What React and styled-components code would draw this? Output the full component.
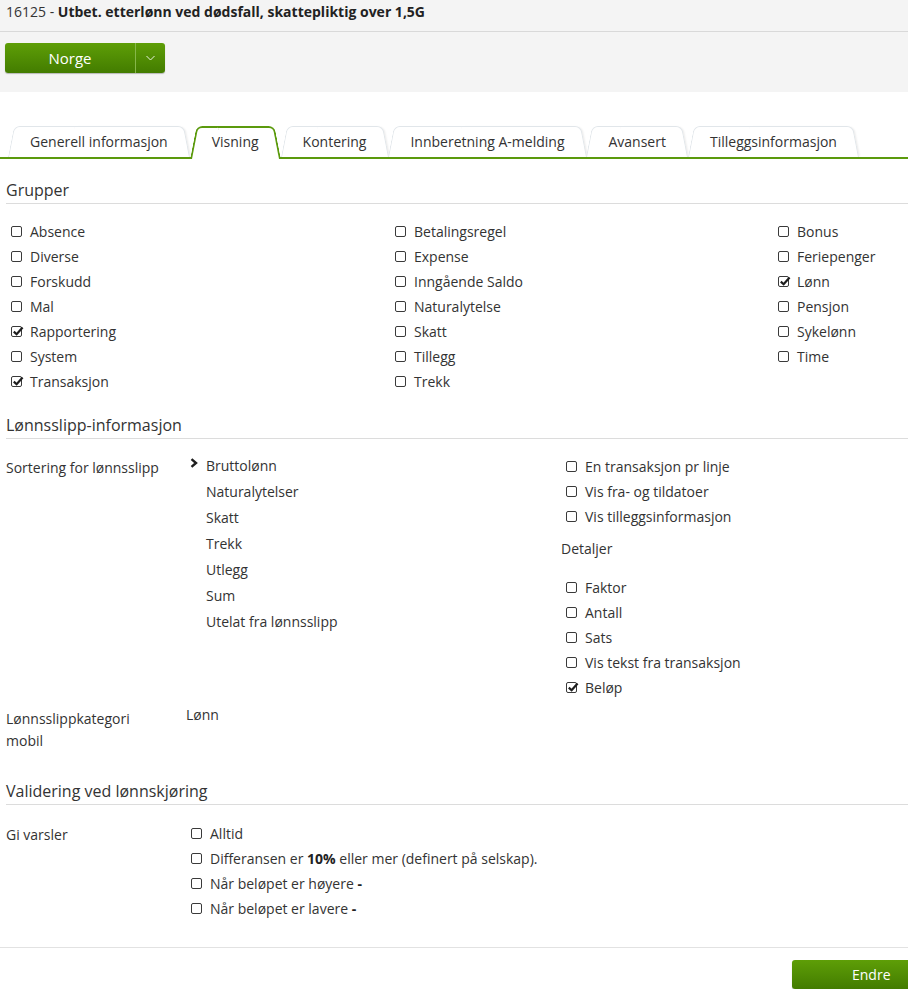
import React from "react";
import styled, { createGlobalStyle, css } from "styled-components";

const GREEN = "#5b9a0d";

const GlobalStyle = createGlobalStyle`
  body {
    margin: 0;
    font-family: "Open Sans", "Noto Sans", sans-serif;
    font-size: 14px;
    color: #333;
    background: #fff;
  }
  * { box-sizing: border-box; }
`;

// Header

const Header = styled.div`
  background: #f4f4f4;
  padding-bottom: 19px;
`;

const TitleBar = styled.div`
  height: 32px;
  padding: 0 6px;
  line-height: 24px;
  border-bottom: 1px solid #d9d9d9;
  color: #333;
  b {
    color: #222;
    font-weight: 700;
  }
`;

const SplitButton = styled.div`
  display: flex;
  width: 160px;
  height: 30px;
  margin: 11px 0 0 5px;
  border-radius: 3px;
  background: linear-gradient(#5e9e07, #437c00);
  box-shadow: 0 1px 1px rgba(0, 0, 0, 0.25);
  color: #fff;
`;

const SplitMain = styled.div`
  flex: 1;
  display: flex;
  align-items: center;
  justify-content: center;
  font-size: 15px;
  border-right: 1px solid #86b74a;
`;

const SplitArrow = styled.div`
  width: 29px;
  display: flex;
  align-items: center;
  justify-content: center;
`;

// Tabs

const TabStrip = styled.div`
  display: flex;
  height: 33px;
  margin-top: 34px;
  padding-left: 8px;
  border-bottom: 2px solid ${GREEN};
`;

const Tab = styled.div`
  position: relative;
  z-index: ${({ $active }) => ($active ? 2 : 0)};
  height: ${({ $active }) => ($active ? 33 : 31)}px;
  margin-bottom: ${({ $active }) => ($active ? -2 : 0)}px;
  padding: 0 22px;
  line-height: 31px;
  color: #333;
  white-space: nowrap;

  &::before,
  &::after {
    content: "";
    position: absolute;
    top: 0;
    bottom: 0;
    width: 60%;
    z-index: -1;
    background: #fff;
    transform-origin: bottom;
    ${({ $active }) =>
      $active
        ? css`border: 2px solid ${GREEN};`
        : css`border: 1px solid #e1e6ea;`}
    border-bottom: none;
  }
  &::before {
    left: 0;
    border-right: none;
    border-radius: 6px 0 0 0;
    transform: skewX(-11deg);
  }
  &::after {
    right: 0;
    border-left: none;
    border-radius: 0 6px 0 0;
    transform: skewX(11deg);
    ${({ $active }) => !$active && css`box-shadow: 2px 0 2px -1px rgba(0, 0, 0, 0.08);`}
  }
`;

// Sections

const Section = styled.section`
  margin: 0 0 0 6px;
`;

const SectionTitle = styled.h2`
  margin: ${({ $top }) => $top}px 0 0;
  padding-bottom: 2px;
  font-size: 16px;
  font-weight: 400;
  line-height: 22px;
  color: #333;
  border-bottom: 1px solid #dcdcdc;
`;

const GroupGrid = styled.div`
  display: grid;
  grid-template-columns: 384px 383px 1fr;
  margin-top: 15px;
  padding-left: 5px;
`;

const Column = styled.div`
  display: flex;
  flex-direction: column;
`;

const CheckRow = styled.label`
  display: flex;
  align-items: center;
  gap: 8px;
  height: 25px;
  color: #333;
  b {
    font-weight: 700;
    color: #222;
  }
`;

const Box = styled.span`
  position: relative;
  flex: none;
  width: 11px;
  height: 11px;
  border: 1px solid #3a3a3a;
  border-radius: 2px;
  background: #fff;
  svg {
    position: absolute;
    left: 0;
    top: -2px;
    overflow: visible;
  }
`;

const FieldRow = styled.div`
  display: grid;
  grid-template-columns: 180px ${({ $mid }) => $mid || "1fr"} ${({ $right }) => ($right ? "1fr" : "")};
  margin-top: ${({ $top }) => $top}px;
`;

const FieldLabel = styled.div`
  max-width: 158px;
  padding-top: ${({ $pad }) => $pad || 0}px;
  line-height: 22px;
  color: #333;
`;

const SortList = styled.div`
  display: flex;
  flex-direction: column;
  padding-left: 20px;
`;

const SortItem = styled.div`
  position: relative;
  height: 26px;
  line-height: 22px;
  color: #333;
  svg {
    position: absolute;
    left: -16px;
    top: 3px;
  }
`;

const CheckList = styled.div`
  display: flex;
  flex-direction: column;
  padding-left: 5px;
  margin-top: ${({ $shift }) => $shift || 0}px;
`;

const SubHeading = styled.div`
  margin: 9px 0 15px -5px;
  line-height: 22px;
  color: #333;
`;

const Value = styled.div`
  line-height: 22px;
  color: #333;
`;

const Footer = styled.div`
  margin-top: 26px;
  border-top: 1px solid #e2e2e2;
  display: flex;
  justify-content: flex-end;
  padding-top: 12px;
`;

const PrimaryButton = styled.button`
  width: 116px;
  height: 29px;
  padding: 0 18px 0 60px;
  border: none;
  border-radius: 3px 0 0 3px;
  background: linear-gradient(#5e9e07, #437c00);
  box-shadow: 0 1px 1px rgba(0, 0, 0, 0.25);
  color: #fff;
  font-family: inherit;
  font-size: 14px;
  text-align: left;
`;

const Check = ({ checked, children }) => (
  <CheckRow>
    <Box>
      {checked && (
        <svg width="12" height="12" viewBox="0 0 12 12">
          <path d="M1.8 6.6 L4.6 9.2 L10.6 2.4" fill="none" stroke="#1e1e1e" strokeWidth="2.2" />
        </svg>
      )}
    </Box>
    <span>{children}</span>
  </CheckRow>
);

const tabs = ["Generell informasjon", "Visning", "Kontering", "Innberetning A-melding", "Avansert", "Tilleggsinformasjon"];

const groups = [
  [["Absence"], ["Diverse"], ["Forskudd"], ["Mal"], ["Rapportering", true], ["System"], ["Transaksjon", true]],
  [["Betalingsregel"], ["Expense"], ["Inngående Saldo"], ["Naturalytelse"], ["Skatt"], ["Tillegg"], ["Trekk"]],
  [["Bonus"], ["Feriepenger"], ["Lønn", true], ["Pensjon"], ["Sykelønn"], ["Time"]],
];

const sortOrder = ["Bruttolønn", "Naturalytelser", "Skatt", "Trekk", "Utlegg", "Sum", "Utelat fra lønnsslipp"];

const details = [["Faktor"], ["Antall"], ["Sats"], ["Vis tekst fra transaksjon"], ["Beløp", true]];

const App = () => {
  return (
    <>
      <GlobalStyle />
      <Header>
        <TitleBar>
          16125 - <b>Utbet. etterlønn ved dødsfall, skattepliktig over 1,5G</b>
        </TitleBar>
        <SplitButton>
          <SplitMain>Norge</SplitMain>
          <SplitArrow>
            <svg width="9" height="6" viewBox="0 0 9 6">
              <path d="M0.5 1 L4.5 5 L8.5 1" fill="none" stroke="#e8f2dc" strokeWidth="1" />
            </svg>
          </SplitArrow>
        </SplitButton>
      </Header>

      <TabStrip>
        {tabs.map((t) => (
          <Tab key={t} $active={t === "Visning"}>
            {t}
          </Tab>
        ))}
      </TabStrip>

      <Section>
        <SectionTitle $top={20}>Grupper</SectionTitle>
        <GroupGrid>
          {groups.map((col, i) => (
            <Column key={i}>
              {col.map(([name, checked]) => (
                <Check key={name} checked={checked}>
                  {name}
                </Check>
              ))}
            </Column>
          ))}
        </GroupGrid>

        <SectionTitle $top={20}>Lønnsslipp-informasjon</SectionTitle>
        <FieldRow $top={16} $mid="375px" $right>
          <FieldLabel $pad={2}>Sortering for lønnsslipp</FieldLabel>
          <SortList>
            {sortOrder.map((s, i) => (
              <SortItem key={s}>
                {i === 0 && (
                  <svg width="8" height="11" viewBox="0 0 8 11">
                    <path d="M1.5 1.2 L6 5 L1.5 8.8" fill="none" stroke="#1e1e1e" strokeWidth="2.4" />
                  </svg>
                )}
                {s}
              </SortItem>
            ))}
          </SortList>
          <CheckList $shift={-1}>
            <Check>En transaksjon pr linje</Check>
            <Check>Vis fra- og tildatoer</Check>
            <Check>Vis tilleggsinformasjon</Check>
            <SubHeading>Detaljer</SubHeading>
            {details.map(([name, checked]) => (
              <Check key={name} checked={checked}>
                {name}
              </Check>
            ))}
          </CheckList>
        </FieldRow>

        <FieldRow $top={4}>
          <FieldLabel $pad={4}>Lønnsslippkategori mobil</FieldLabel>
          <Value>Lønn</Value>
        </FieldRow>

        <SectionTitle $top={28}>Validering ved lønnskjøring</SectionTitle>
        <FieldRow $top={16}>
          <FieldLabel $pad={3}>Gi varsler</FieldLabel>
          <CheckList>
            <Check>Alltid</Check>
            <Check>
              Differansen er <b>10%</b> eller mer (definert på selskap).
            </Check>
            <Check>
              Når beløpet er høyere <b>-</b>
            </Check>
            <Check>
              Når beløpet er lavere <b>-</b>
            </Check>
          </CheckList>
        </FieldRow>
      </Section>

      <Footer>
        <PrimaryButton>Endre</PrimaryButton>
      </Footer>
    </>
  );
};

export default App;
